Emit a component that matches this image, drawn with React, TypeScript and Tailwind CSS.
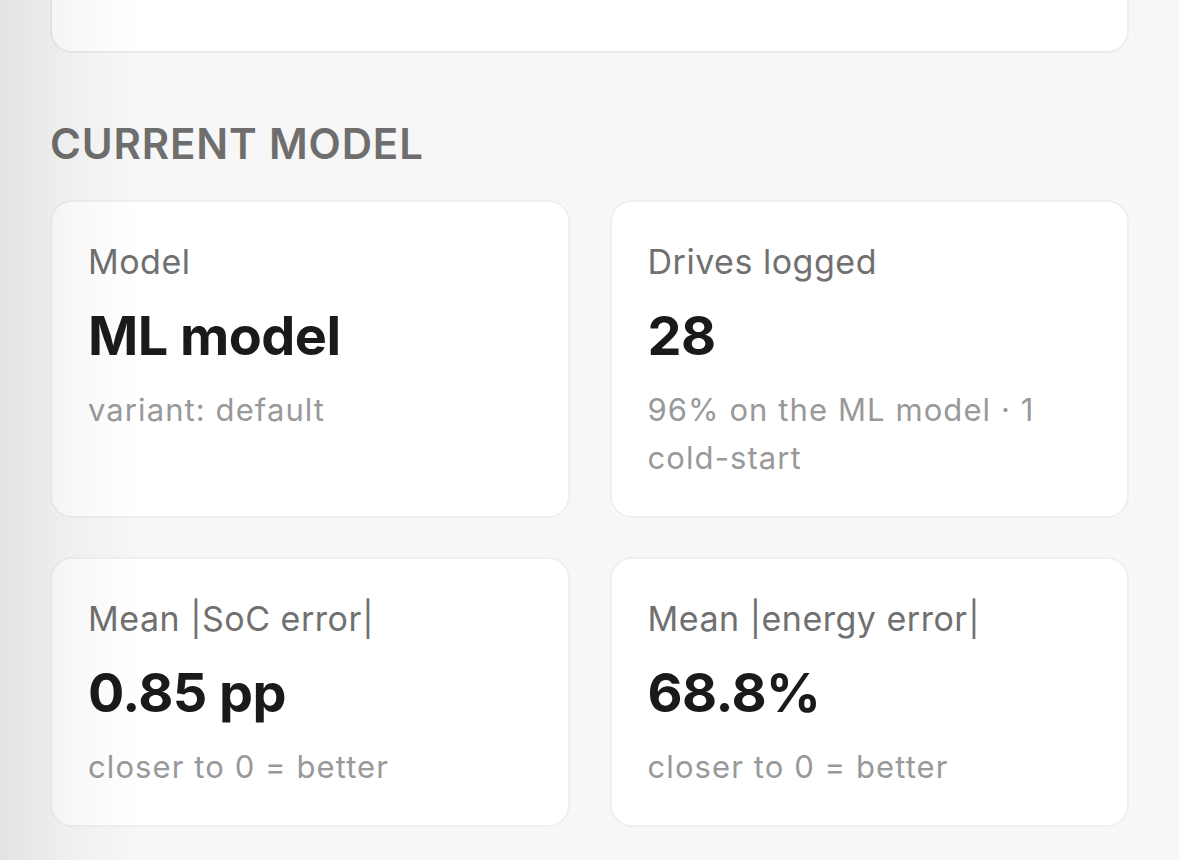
// Model summary section: stat cards for the current ML model.

interface Stat {
  label: string;
  value: string;
  sub: string;
}

const stats: Stat[] = [
  { label: "Model", value: "ML model", sub: "variant: default" },
  { label: "Drives logged", value: "28", sub: "96% on the ML model · 1 cold-start" },
  { label: "Mean |SoC error|", value: "0.85 pp", sub: "closer to 0 = better" },
  { label: "Mean |energy error|", value: "68.8%", sub: "closer to 0 = better" },
];

function StatCard({ stat }: { stat: Stat }) {
  return (
    <div className="rounded-[22px] border-2 border-[#efefef] bg-white px-[36px] pt-[36px] pb-[34px]">
      <p className="text-[34px] leading-[48px] tracking-[0.015em] text-[#707070]">{stat.label}</p>
      <p className="mt-[18px] text-[54px] font-bold leading-[64px] tracking-[-0.01em] text-[#1a1a1a]">
        {stat.value}
      </p>
      <p className="mt-[18px] text-[31px] leading-[48px] tracking-[0.035em] text-[#999999]">{stat.sub}</p>
    </div>
  );
}

export default function App() {
  return (
    <div
      className="relative min-h-[860px] overflow-hidden bg-[#f7f7f7] px-[50px]"
      style={{ fontFamily: "Inter, 'Noto Sans', sans-serif" }}
    >
      {/* previous section card, scrolled mostly out of view */}
      <div className="-mt-[100px] h-[153px] rounded-[22px] border-2 border-[#ececec] bg-white" />

      {/* Section heading */}
      <h2 className="mt-[67px] text-[42px] font-semibold leading-[48px] tracking-[0.02em] text-[#6e6e6e]">
        CURRENT MODEL
      </h2>

      <div className="mt-[32px] grid grid-cols-2 gap-x-[40px] gap-y-[39px]">
        {stats.map((s) => (
          <StatCard key={s.label} stat={s} />
        ))}
      </div>

      {/* edge shadow from the panel on the left */}
      <div className="pointer-events-none absolute inset-y-0 left-0 w-[140px] bg-gradient-to-r from-black/[0.08] via-black/[0.03] to-transparent" />
    </div>
  );
}
